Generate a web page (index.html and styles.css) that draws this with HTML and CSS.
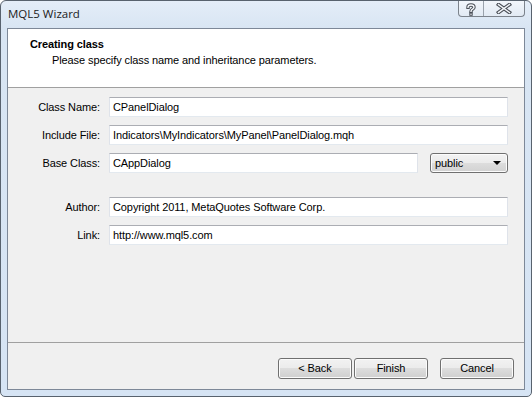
FILE: index.html
```html
<!DOCTYPE html>
<html>
<head>
<meta charset="utf-8">
<link rel="stylesheet" href="styles.css">
</head>
<body>
<div class="window">
  <div class="titlebar">
    <span class="title">MQL5 Wizard</span>
    <div class="caption-btns">
      <span class="cb cb-help">
        <svg width="10" height="13" viewBox="0 0 10 13">
          <path d="M2 4.2 C2 1.2 8 1.2 8 4.2 C8 6.2 5 6.2 5 8.4" fill="none" stroke="#4a4f57" stroke-width="3.4" stroke-linecap="square"/>
          <path d="M2 4.2 C2 1.2 8 1.2 8 4.2 C8 6.2 5 6.2 5 8.4" fill="none" stroke="#f4f7fb" stroke-width="1.4" stroke-linecap="square"/>
          <rect x="3.3" y="9.6" width="3.4" height="3.2" fill="#4a4f57"/>
          <rect x="4.3" y="10.6" width="1.4" height="1.2" fill="#f4f7fb"/>
        </svg>
      </span>
      <span class="cb cb-close">
        <svg width="16" height="11" viewBox="0 0 16 11">
          <path d="M2.5 1.5 L13.5 9.5 M13.5 1.5 L2.5 9.5" stroke="#4a4f57" stroke-width="3.6" stroke-linecap="square"/>
          <path d="M2.5 1.5 L13.5 9.5 M13.5 1.5 L2.5 9.5" stroke="#f4f7fb" stroke-width="1.5" stroke-linecap="square"/>
        </svg>
      </span>
    </div>
  </div>
  <div class="client">
    <div class="header">
      <div class="h-title">Creating class</div>
      <div class="h-sub">Please specify class name and inheritance parameters.</div>
    </div>
    <div class="form">
      <div class="group">
        <div class="row"><span class="label">Class Name:</span><div class="input">CPanelDialog</div></div>
        <div class="row"><span class="label">Include File:</span><div class="input">Indicators\MyIndicators\MyPanel\PanelDialog.mqh</div></div>
        <div class="row"><span class="label">Base Class:</span><div class="input input-short">CAppDialog</div><div class="select"><span>public</span><span class="arrow"></span></div></div>
      </div>
      <div class="group">
        <div class="row"><span class="label">Author:</span><div class="input">Copyright 2011, MetaQuotes Software Corp.</div></div>
        <div class="row"><span class="label">Link:</span><div class="input">http://www.mql5.com</div></div>
      </div>
    </div>
    <div class="footer">
      <div class="btn">&lt; Back</div>
      <div class="btn">Finish</div>
      <div class="btn btn-cancel">Cancel</div>
    </div>
  </div>
</div>
</body>
</html>
```
FILE: styles.css
```css
* { box-sizing: border-box; }
html, body { margin: 0; padding: 0; background: #ffffff; }
body {
  font-family: "Liberation Sans", Arial, sans-serif;
  font-size: 11px;
  letter-spacing: -0.1px;
  color: #000;
}
.window {
  width: 532px;
  height: 397px;
  border: 1px solid #58626e;
  border-radius: 6px 6px 5px 5px;
  background: linear-gradient(#e4edf8 0px, #d8e5f3 28px, #d6e4f4 100%);
  padding: 0 6px 6px 6px;
  display: flex;
  flex-direction: column;
}
.titlebar {
  height: 27px;
  display: flex;
  justify-content: space-between;
  align-items: flex-start;
}
.title {
  font-family: "Open Sans", "Liberation Sans", sans-serif;
  font-size: 11.5px;
  letter-spacing: 0;
  color: #1b1b1b;
  margin-top: 5px;
  margin-left: 1px;
}
.caption-btns {
  display: flex;
  height: 16px;
  border: 1px solid #7c838c;
  border-top: none;
  border-radius: 0 0 4px 4px;
  background: linear-gradient(#f2f6fb, #e2eaf4);
}
.cb {
  display: flex;
  align-items: center;
  justify-content: center;
  height: 15px;
}
.cb-help { width: 25px; border-right: 1px solid #9aa2ac; padding-top: 1px; }
.cb-close { width: 40px; }
.client {
  flex: 1;
  border: 1px solid #7d8898;
  background: #f0f0f0;
  display: flex;
  flex-direction: column;
}
.header {
  height: 59px;
  background: #ffffff;
  border-bottom: 1px solid #a0a0a0;
  padding: 8px 0 0 22px;
}
.h-title {
  font-weight: bold;
  height: 15px;
  line-height: 15px;
}
.h-sub {
  padding-left: 22px;
  margin-top: 1px;
  line-height: 15px;
}
.form {
  flex: 1;
  padding-top: 9px;
  display: flex;
  flex-direction: column;
  gap: 24px;
}
.group {
  display: flex;
  flex-direction: column;
  gap: 8px;
}
.row {
  display: flex;
  align-items: center;
  height: 20px;
}
.label {
  width: 92px;
  text-align: right;
  margin-right: 9px;
  color: #000;
}
.input {
  width: 399px;
  height: 20px;
  background: #ffffff;
  border: 1px solid #dfe3ea;
  border-top-color: #abadb3;
  border-bottom-color: #e3e9ef;
  padding: 0 3px;
  line-height: 18px;
  white-space: nowrap;
  overflow: hidden;
}
.input-short { width: 309px; margin-right: 12px; }
.select {
  width: 78px;
  height: 20px;
  margin-top: -1px;
  border: 1px solid #707070;
  border-radius: 3px;
  background: linear-gradient(#f3f3f3 0%, #ebebeb 50%, #dddddd 50%, #d2d2d2 100%);
  box-shadow: inset 0 0 0 1px #fcfcfc;
  display: flex;
  align-items: center;
  justify-content: space-between;
  padding: 0 6px 0 4px;
}
.arrow {
  width: 0;
  height: 0;
  border-left: 4px solid transparent;
  border-right: 4px solid transparent;
  border-top: 4px solid #000;
}
.footer {
  height: 47px;
  border-top: 1px solid #a0a0a0;
  display: flex;
  justify-content: flex-end;
  align-items: flex-start;
  padding: 15px 10px 0 0;
  gap: 2px;
}
.btn {
  width: 74px;
  height: 21px;
  border: 1px solid #707070;
  border-radius: 3px;
  background: linear-gradient(#f2f2f2 0%, #ebebeb 50%, #dddddd 50%, #cfcfcf 100%);
  box-shadow: inset 0 0 0 1px #fbfbfb;
  display: flex;
  align-items: center;
  justify-content: center;
  line-height: 19px;
}
.btn-cancel { margin-left: 10px; }
```
